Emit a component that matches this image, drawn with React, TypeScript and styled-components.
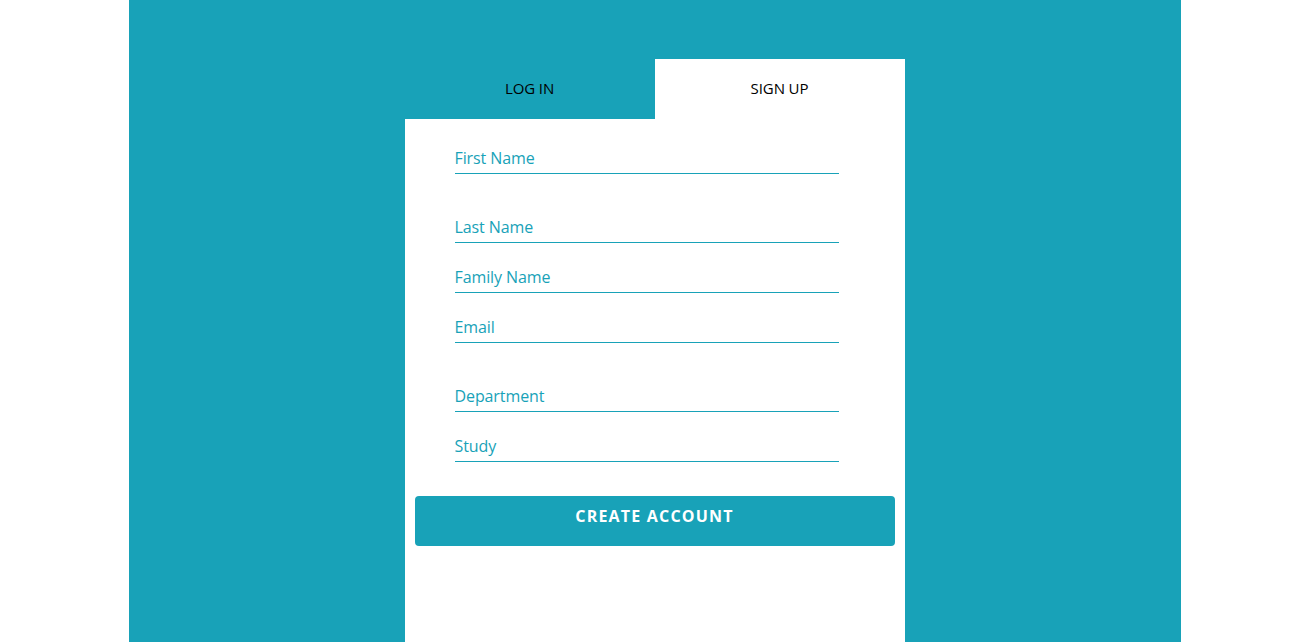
import React from "react";
import styled, { createGlobalStyle } from "styled-components";

const TEAL = "#18a2b8";

const Global = createGlobalStyle`
  html, body { margin: 0; padding: 0; background: #ffffff; }
  body { font-family: "Open Sans", "Noto Sans", sans-serif; }
  * { box-sizing: border-box; }
`;

const Page = styled.div`
  width: 1052px;
  min-height: 642px;
  margin: 0 auto;
  background: ${TEAL};
  padding-top: 59px;
  display: flex;
  flex-direction: column;
  align-items: center;
`;

const Card = styled.div`
  width: 500px;
  flex: 1;
  min-height: 583px;
  background: #ffffff;
  display: flex;
  flex-direction: column;
`;

const Tabs = styled.div`
  display: flex;
  height: 60px;
`;

const Tab = styled.button<{ $active?: boolean }>`
  flex: 1;
  border: none;
  margin: 0;
  padding: 0 0 3px;
  background: ${(p) => (p.$active ? "#ffffff" : TEAL)};
  color: #000000;
  font-family: "Open Sans", "Noto Sans", sans-serif;
  font-size: 15px;
  letter-spacing: -0.1px;
  display: flex;
  align-items: center;
  justify-content: center;
  cursor: pointer;
`;

const Form = styled.form`
  display: flex;
  flex-direction: column;
  padding: 21px 10px 0;
`;

const Input = styled.input<{ $spaced?: boolean }>`
  width: 384px;
  height: 34px;
  margin: ${(p) => (p.$spaced ? "19px" : "0")} 0 16px 40px;
  padding: 3px 0 0;
  border: none;
  border-bottom: 1px solid ${TEAL};
  outline: none;
  background: transparent;
  font-family: "Open Sans", "Noto Sans", sans-serif;
  font-size: 16px;
  letter-spacing: -0.1px;
  color: ${TEAL};
  &::placeholder { color: ${TEAL}; opacity: 1; }
`;

const Submit = styled.button`
  margin-top: 18px;
  width: 480px;
  height: 50px;
  border: none;
  border-radius: 4px;
  background: ${TEAL};
  color: #ffffff;
  font-family: "Open Sans", "Noto Sans", sans-serif;
  font-weight: 700;
  font-size: 16px;
  letter-spacing: 1.2px;
  padding: 0 0 10px;
  cursor: pointer;
`;

export default function App() {
  return (
    <>
      <Global />
      <Page>
        <Card>
          <Tabs>
            <Tab>LOG IN</Tab>
            <Tab $active>SIGN UP</Tab>
          </Tabs>
          <Form onSubmit={(e) => e.preventDefault()}>
            <Input placeholder="First Name" />
            <Input $spaced placeholder="Last Name" />
            <Input placeholder="Family Name" />
            <Input placeholder="Email" />
            <Input $spaced placeholder="Department" />
            <Input placeholder="Study" />
            <Submit type="submit">CREATE ACCOUNT</Submit>
          </Form>
        </Card>
      </Page>
    </>
  );
}
